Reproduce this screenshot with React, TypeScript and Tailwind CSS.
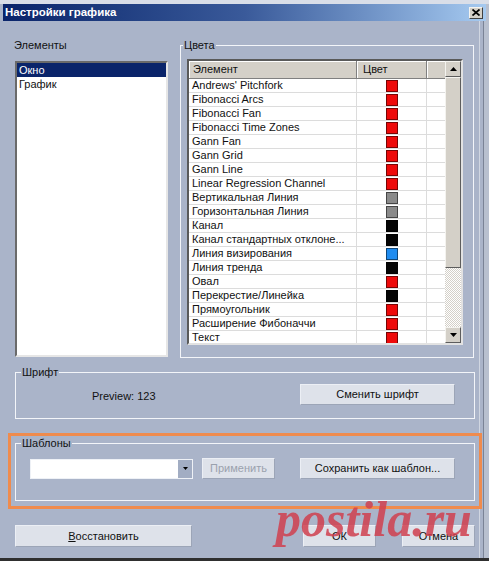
import type { ReactNode } from 'react';

const RED = '#ee0a0a';
const GRAY = '#8a8a8a';
const BLACK = '#050505';
const BLUE = '#1f8cf0';

const rows: [string, string][] = [
    ["Andrews' Pitchfork", RED],
    ['Fibonacci Arcs', RED],
    ['Fibonacci Fan', RED],
    ['Fibonacci Time Zones', RED],
    ['Gann Fan', RED],
    ['Gann Grid', RED],
    ['Gann Line', RED],
    ['Linear Regression Channel', RED],
    ['Вертикальная Линия', GRAY],
    ['Горизонтальная Линия', GRAY],
    ['Канал', BLACK],
    ['Канал стандартных отклоне...', BLACK],
    ['Линия визирования', BLUE],
    ['Линия тренда', BLACK],
    ['Овал', RED],
    ['Перекрестие/Линейка', BLACK],
    ['Прямоугольник', RED],
    ['Расширение Фибоначчи', RED],
    ['Текст', RED],
];

const Button = ({ children, className, disabled }: { children: ReactNode; className: string; disabled?: boolean }) => (
    <div
        className={`${className} flex items-center justify-center bg-[#dee2ea] border border-[#eceff5] border-r-[#9ca5b7] border-b-[#9ca5b7] ${disabled ? 'text-[#9aa1ad]' : 'text-[#111]'}`}
    >
        {children}
    </div>
);

const Arrow = ({ up }: { up?: boolean }) => (
    <svg width="7" height="4" viewBox="0 0 7 4">
        <path d={up ? 'M0 4 L3.5 0 L7 4 Z' : 'M0 0 L7 0 L3.5 4 Z'} fill="#000" />
    </svg>
);

const ScrollButton = ({ up }: { up?: boolean }) => (
    <div className="h-[16px] flex items-center justify-center bg-[#d4d0c8] border border-[#f4f3ef] border-r-[#5d5d5d] border-b-[#5d5d5d]">
        <Arrow up={up} />
    </div>
);

export default function App() {
    return (
        <div className="relative w-[489px] h-[561px] overflow-hidden flex flex-col bg-[#aab4c9] text-[11px] text-[#111] font-['Liberation_Sans',Arial,sans-serif] border-t-[4px] border-t-[#d9dee8] shadow-[inset_-5px_0_0_#b8c0cf,inset_-6px_0_0_#7a8396,inset_-9px_0_0_#aab4c9,inset_-10px_0_0_#d0d6e1]">
            {/* title bar */}
            <div className="mx-[3px] h-[17px] flex items-center justify-between pl-[2px] pr-[3px] bg-linear-to-r from-[#0a246a] via-[#3a5a9a] to-[#a6caf0]">
                <span className="text-white font-bold text-[11.5px] leading-none">Настройки графика</span>
                <div className="w-[14px] h-[12px] flex items-center justify-center bg-[#d4d0c8] border border-[#f4f3ef] border-r-[#404040] border-b-[#404040]">
                    <svg width="8" height="7" viewBox="0 0 8 7">
                        <path d="M0.5 0.5 L7.5 6.5 M7.5 0.5 L0.5 6.5" stroke="#000" strokeWidth="1.7" />
                    </svg>
                </div>
            </div>

            {/* elements + colours */}
            <div className="mt-[17px] flex h-[320px]">
                <div className="ml-[15px] w-[153px] flex flex-col">
                    <div className="leading-[14px] h-[14px] -ml-[1px]">Элементы</div>
                    <div className="mt-[9px] h-[296px] bg-white border-2 border-[#6a6a6a] border-r-[#e6e6e6] border-b-[#e6e6e6]">
                        <div className="h-[14px] leading-[14px] pl-[2px] bg-[#0a246a] text-white">Окно</div>
                        <div className="h-[14px] leading-[14px] pl-[2px]">График</div>
                    </div>
                </div>

                <fieldset className="ml-[12px] w-[294px] h-[320px] border border-[#f3f5f9]">
                    <legend className="ml-[2px] px-[1px] leading-[14px]">Цвета</legend>
                    <div className="ml-[6px] mt-[7px] w-[276px] h-[286px] flex bg-white border-2 border-[#5a5a5a] border-r-[#e2e2e2] border-b-[#e2e2e2]">
                        <div className="w-[256px] overflow-hidden">
                            <div className="flex h-[18px] bg-[#d4d0c8] border-b border-[#808080]">
                                <div className="w-[168px] pl-[4px] leading-[17px] border-r border-[#808080] shadow-[inset_1px_1px_0_#fff]">Элемент</div>
                                <div className="w-[70px] pl-[6px] leading-[17px] border-r border-[#808080] shadow-[inset_1px_1px_0_#fff]">Цвет</div>
                                <div className="w-[18px] shadow-[inset_1px_1px_0_#fff]" />
                            </div>
                            {rows.map(([name, color]) => (
                                <div key={name} className="flex h-[14px] border-b border-[#dcdcdc]">
                                    <div className="w-[168px] pl-[3px] leading-[13px] whitespace-nowrap border-r border-[#dcdcdc]">{name}</div>
                                    <div className="w-[70px] flex items-center justify-center border-r border-[#dcdcdc]">
                                        <div className="w-[12px] h-[12px] border border-black/50" style={{ backgroundColor: color }} />
                                    </div>
                                    <div className="w-[18px]" />
                                </div>
                            ))}
                        </div>
                        <div className="w-[16px] flex flex-col">
                            <ScrollButton up />
                            <div className="h-[191px] bg-[#d4d0c8] border border-[#f4f3ef] border-r-[#5d5d5d] border-b-[#5d5d5d]" />
                            <div className="flex-1 bg-[repeating-conic-gradient(#d4d0c8_0%_25%,#ffffff_0%_50%)] bg-[length:2px_2px]" />
                            <ScrollButton />
                        </div>
                    </div>
                </fieldset>
            </div>

            {/* font */}
            <fieldset className="mt-[7px] ml-[15px] w-[460px] h-[54px] border border-[#f3f5f9]">
                <legend className="ml-[5px] px-[1px] leading-[14px]">Шрифт</legend>
                <div className="mt-[5px] flex items-center h-[21px]">
                    <span className="ml-[76px] mt-[4px]">Preview: 123</span>
                    <Button className="ml-auto mr-[19px] w-[155px] h-[21px]">Сменить шрифт</Button>
                </div>
            </fieldset>

            {/* templates */}
            <div className="mt-[14px] ml-[8px] w-[474px] h-[76px] border-[3px] border-[#ef8b4d]">
                <fieldset className="ml-[4px] w-[460px] h-[65px] border border-[#f3f5f9]">
                    <legend className="ml-[5px] px-[1px] leading-[14px]">Шаблоны</legend>
                    <div className="mt-[8px] flex items-center h-[21px]">
                        <div className="ml-[14px] w-[163px] h-[20px] flex bg-white border border-[#eef1f6]">
                            <div className="flex-1" />
                            <div className="w-[14px] flex items-center justify-center bg-[#a2adc3]">
                                <svg width="5" height="3" viewBox="0 0 5 3">
                                    <path d="M0 0 L5 0 L2.5 3 Z" fill="#000" />
                                </svg>
                            </div>
                        </div>
                        <Button disabled className="ml-[9px] w-[73px] h-[21px]">Применить</Button>
                        <Button className="ml-[25px] w-[155px] h-[21px]">Сохранить как шаблон...</Button>
                    </div>
                </fieldset>
            </div>

            {/* bottom buttons */}
            <div className="mt-[16px] flex">
                <Button className="ml-[15px] w-[177px] h-[22px]">
                    <span><span className="underline">В</span>осстановить</span>
                </Button>
                <Button className="ml-[111px] w-[73px] h-[22px]">ОК</Button>
                <Button className="ml-[26px] w-[73px] h-[22px]">Отмена</Button>
            </div>

            <div className="mt-auto h-[3px] bg-[#2f2f2f]" />

            <div className="absolute left-[276px] top-[490px] pointer-events-none select-none text-[50px] leading-none font-bold italic text-[#d0404f]/85 font-['Liberation_Serif',serif]">
                postila.ru
            </div>
        </div>
    );
}
